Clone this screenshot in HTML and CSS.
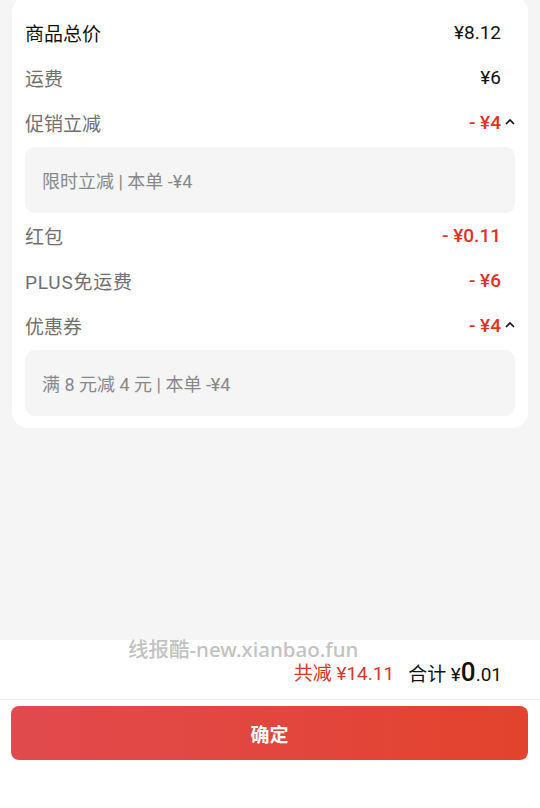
FILE: index.html
```html
<!DOCTYPE html>
<html lang="zh-CN">
<head>
  <meta charset="UTF-8">
  <meta name="viewport" content="width=device-width, initial-scale=1.0">
  <title>价格明细</title>
  <link rel="stylesheet" href="styles.css">
</head>
<body>
  <div id="page">
    <div id="content">
      <div class="card">
        <div class="row">
          <span class="label strong">商品总价</span>
          <span class="value">¥8.12</span>
          <span class="caret"></span>
        </div>
        <div class="row">
          <span class="label">运费</span>
          <span class="value">¥6</span>
          <span class="caret"></span>
        </div>
        <div class="row">
          <span class="label">促销立减</span>
          <span class="value minus">- ¥4</span>
          <span class="caret">
            <svg width="10" height="7" viewBox="0 0 10 7"><path d="M1 6 L5 2 L9 6" fill="none" stroke="#111" stroke-width="1.6"/></svg>
          </span>
        </div>
        <div class="detail">限时立减 | 本单 -¥4</div>
        <div class="row">
          <span class="label">红包</span>
          <span class="value minus">- ¥0.11</span>
          <span class="caret"></span>
        </div>
        <div class="row">
          <span class="label wide">PLUS免运费</span>
          <span class="value minus">- ¥6</span>
          <span class="caret"></span>
        </div>
        <div class="row">
          <span class="label">优惠券</span>
          <span class="value minus">- ¥4</span>
          <span class="caret">
            <svg width="10" height="7" viewBox="0 0 10 7"><path d="M1 6 L5 2 L9 6" fill="none" stroke="#111" stroke-width="1.6"/></svg>
          </span>
        </div>
        <div class="detail">满 8 元减 4 元 | 本单 -¥4</div>
      </div>
    </div>

    <div id="footer">
      <div class="watermark">线报酷-new.xianbao.fun</div>
      <div class="summary">
        <span class="saved">共减 ¥14.11</span>
        <span class="total">合计 ¥<span class="big">0</span>.01</span>
      </div>
      <div class="actions">
        <button class="confirm">确定</button>
      </div>
    </div>
  </div>
</body>
</html>
```

FILE: styles.css
```css
*{
  box-sizing: border-box;
}

body{
  margin: 0;
  background-color: #f5f5f5;
  font-family: Roboto, "Noto Sans CJK SC", sans-serif;
}

#page{
  display: flex;
  flex-direction: column;
  height: 808px;
  overflow: hidden;
}

#content{
  flex: 1;
  padding: 0 12px;
}

.card{
  margin-top: -4px;
  background-color: #fff;
  border-radius: 16px;
  padding: 14px 13px 12px;
}

.row{
  display: flex;
  align-items: center;
  height: 45px;
}

.label{
  flex: 1;
  font-size: 19px;
  color: #707070;
}

.label.strong{
  color: #111;
}

.label.wide{
  letter-spacing: 0.8px;
}

.value{
  font-size: 19px;
  color: #111;
}

.value.minus{
  color: #e0321f;
  font-weight: 500;
}

.caret{
  width: 14px;
  display: flex;
  justify-content: flex-end;
  padding-bottom: 2px;
}

.detail{
  margin-top: 2px;
  height: 66px;
  display: flex;
  align-items: center;
  padding-left: 17px;
  background-color: #f5f5f5;
  border-radius: 10px;
  font-size: 18px;
  color: #888;
}

#footer{
  position: relative;
  height: 168px;
  background-color: #fff;
}

.watermark{
  position: absolute;
  left: 128px;
  top: -1px;
  line-height: 20px;
  font-size: 20.5px;
  font-weight: 500;
  color: #c2c2c2;
  font-family: "Noto Sans", "Noto Sans CJK SC", sans-serif;
}

.summary{
  height: 60px;
  display: flex;
  align-items: center;
  justify-content: flex-end;
  padding: 4px 38px 0 0;
  border-bottom: 1px solid #f2f2f2;
  font-size: 19px;
}

.saved{
  color: #d7372a;
  margin-right: 14px;
}

.total{
  color: #111;
}

.total .big{
  font-size: 26px;
  font-weight: 500;
}

.actions{
  padding: 6px 12px 0 11px;
}

.confirm{
  width: 100%;
  height: 54px;
  border: none;
  border-radius: 8px;
  background: linear-gradient(90deg, #e14a4e, #e3432d);
  color: #fff;
  font-size: 19px;
  font-weight: bold;
  font-family: "Noto Sans CJK SC", sans-serif;
}
```
